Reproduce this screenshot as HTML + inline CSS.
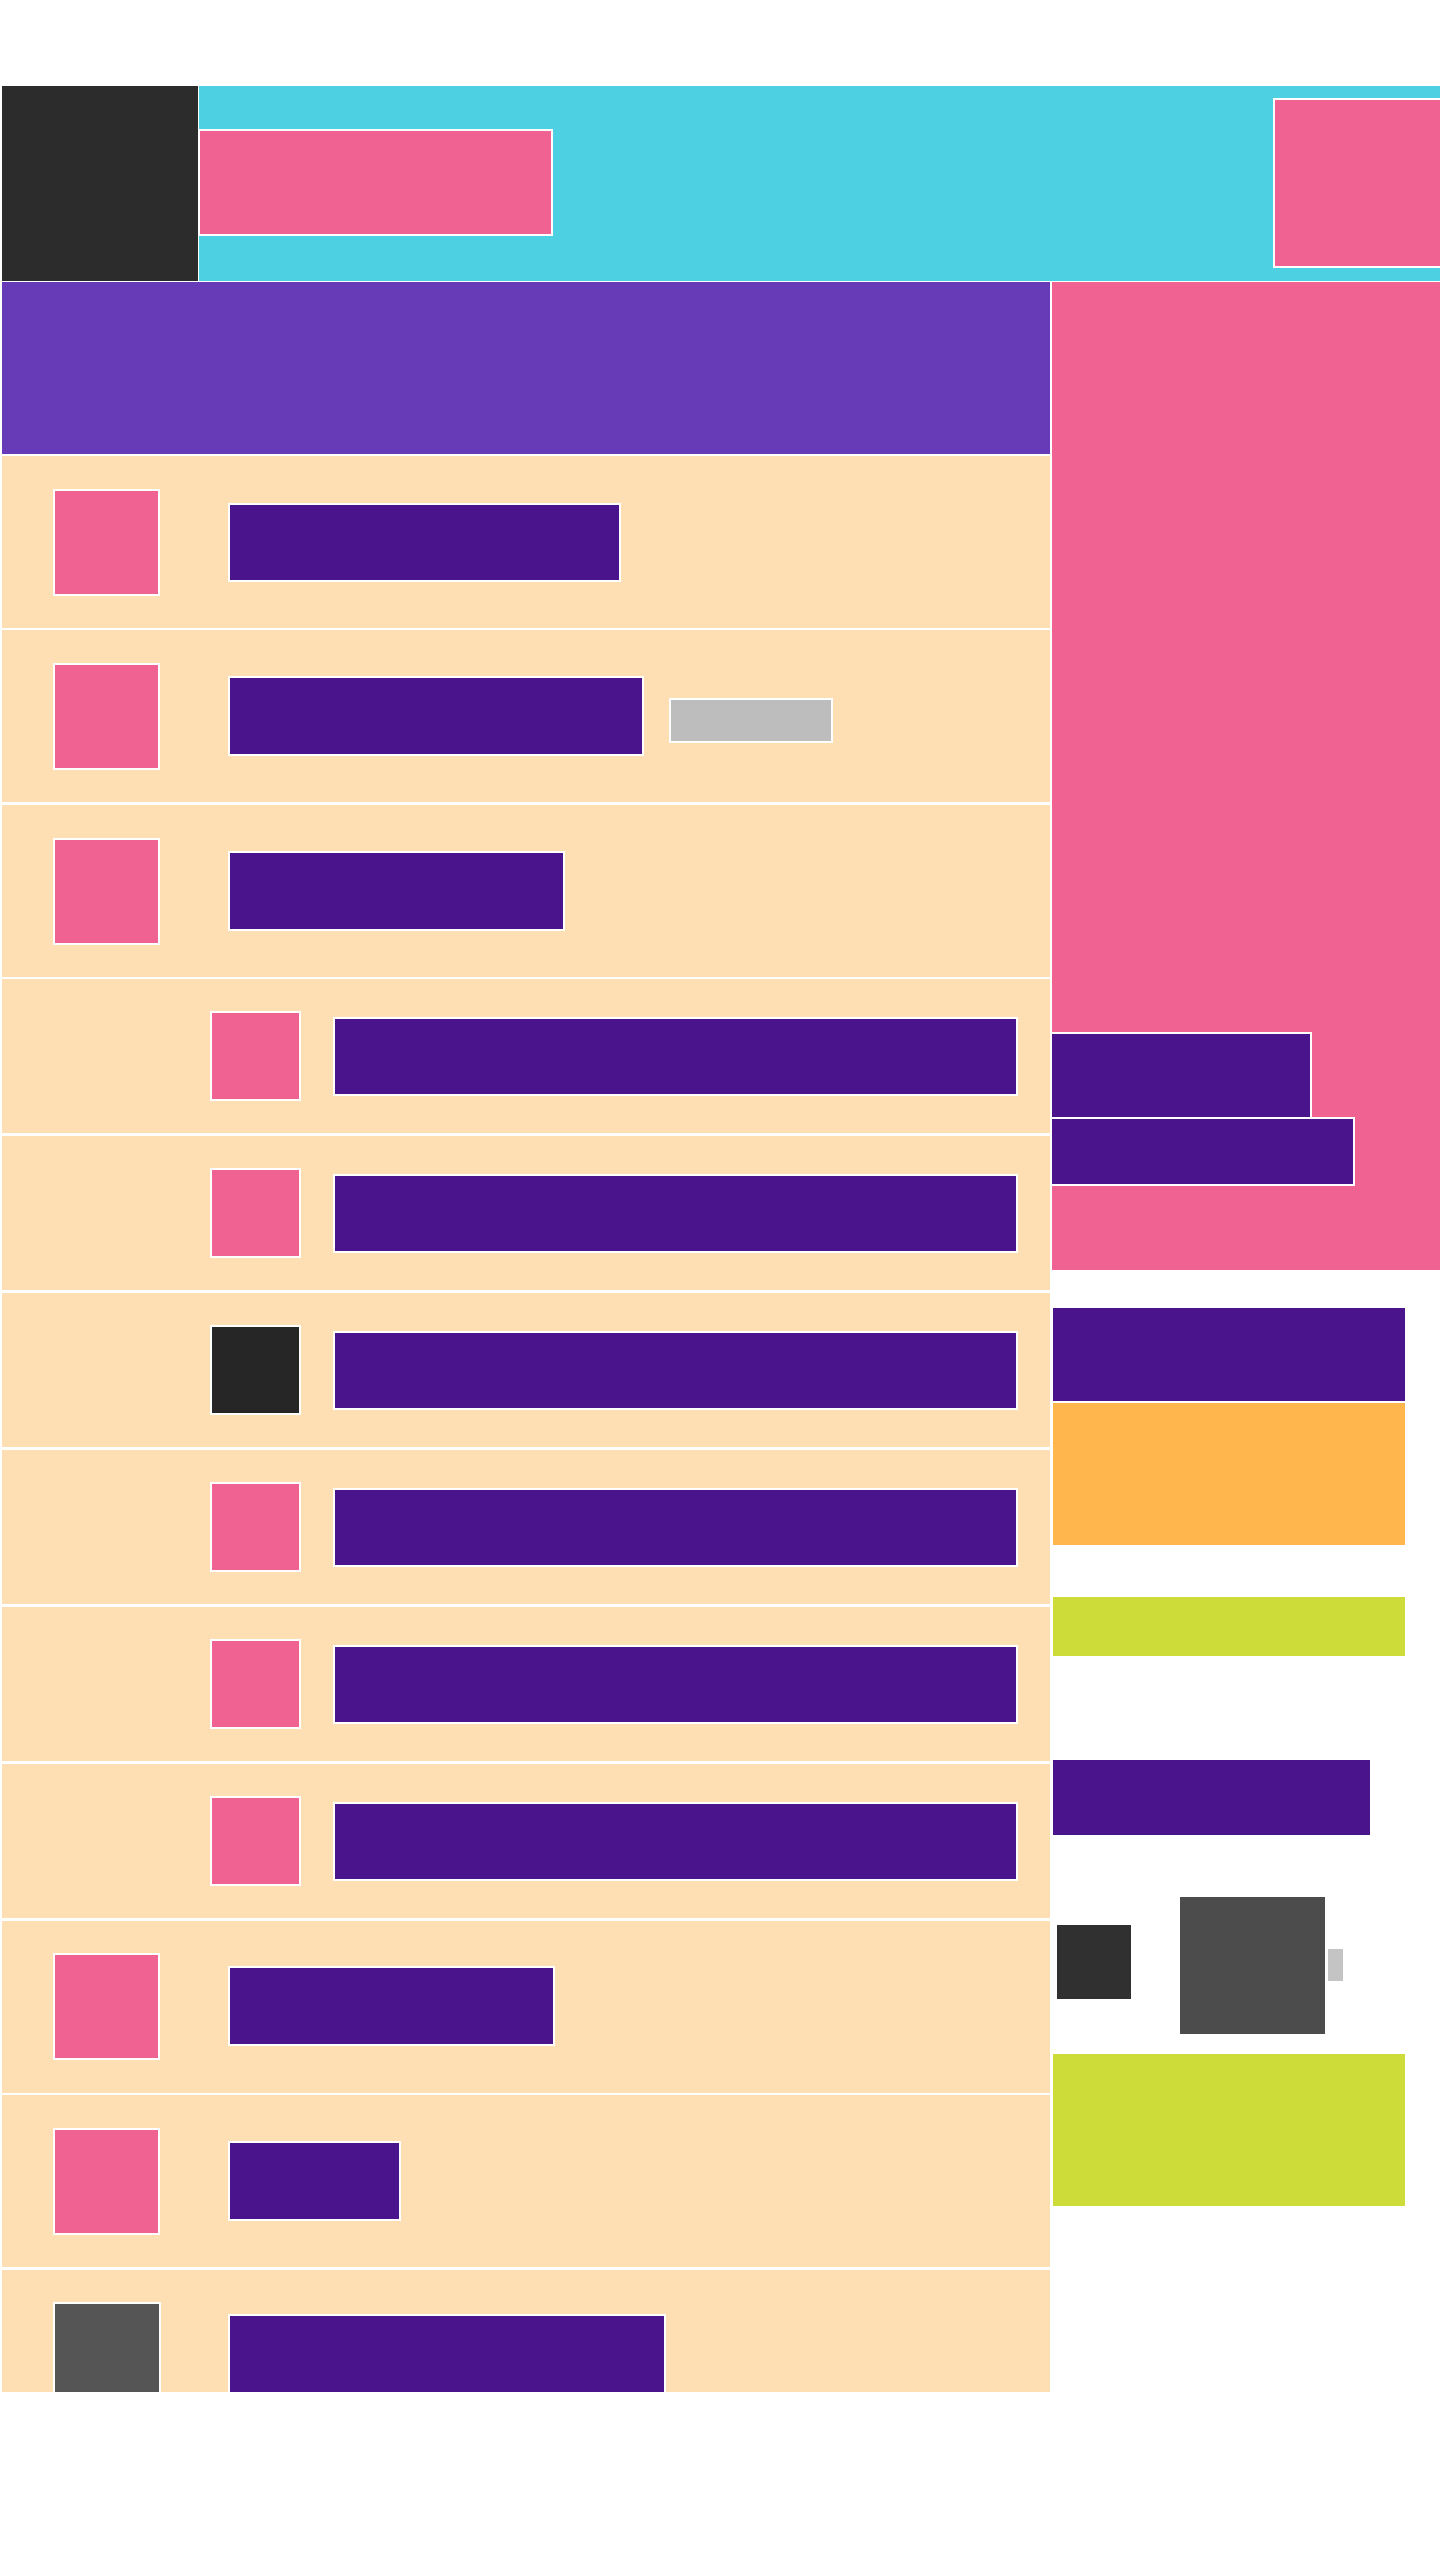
<!DOCTYPE html>
<html><head><meta charset="utf-8"><style>
html,body{margin:0;padding:0;background:#fff;}
body{width:1440px;height:2560px;position:relative;overflow:hidden;font-family:"Liberation Sans",sans-serif;}
div{position:absolute;box-sizing:border-box;}
.b{border:2px solid #fff;}
.row{background:#fddfb3;left:2px;width:1048px;}
.pk{background:#f06292;}
.pu{background:#4a148c;}
</style></head><body>
<!-- header -->
<div style="left:2px;top:86px;width:196px;height:195px;background:#2c2c2c"></div>
<div style="left:199px;top:86px;width:1241px;height:195px;background:#4dd0e1"></div>
<div class="b pk" style="left:198px;top:129px;width:355px;height:107px"></div>
<div class="b pk" style="left:1273px;top:98px;width:170px;height:170px"></div>
<!-- purple banner -->
<div style="left:2px;top:282px;width:1048px;height:172px;background:#673ab7"></div>
<!-- right pink sidebar -->
<div class="pk" style="left:1052px;top:282px;width:388px;height:988px"></div>
<div class="b pu" style="left:1050px;top:1032px;width:262px;height:87px"></div>
<div class="b pu" style="left:1050px;top:1117px;width:305px;height:69px"></div>
<!-- right column -->
<div class="pu" style="left:1053px;top:1308px;width:352px;height:93px"></div>
<div style="left:1053px;top:1403px;width:352px;height:142px;background:#ffb74d"></div>
<div style="left:1053px;top:1597px;width:352px;height:59px;background:#cddc39"></div>
<div class="pu" style="left:1053px;top:1760px;width:317px;height:75px"></div>
<div style="left:1057px;top:1925px;width:74px;height:74px;background:#303030"></div>
<div style="left:1180px;top:1897px;width:145px;height:137px;background:#4c4c4c"></div>
<div style="left:1328px;top:1949px;width:15px;height:32px;background:#c4c4c4"></div>
<div style="left:1053px;top:2054px;width:352px;height:152px;background:#cddc39"></div>

<!-- rows type A -->
<div class="row" style="top:456px;height:172px"></div>
<div class="b pk" style="left:53px;top:489px;width:107px;height:107px"></div>
<div class="b pu" style="left:228px;top:503px;width:393px;height:79px"></div>

<div class="row" style="top:630px;height:172px"></div>
<div class="b pk" style="left:53px;top:663px;width:107px;height:107px"></div>
<div class="b pu" style="left:228px;top:676px;width:416px;height:80px"></div>
<div class="b" style="left:669px;top:698px;width:164px;height:45px;background:#bdbdbd"></div>

<div class="row" style="top:805px;height:172px"></div>
<div class="b pk" style="left:53px;top:838px;width:107px;height:107px"></div>
<div class="b pu" style="left:228px;top:851px;width:337px;height:80px"></div>

<!-- rows type B -->
<div class="row" style="top:979px;height:154px"></div>
<div class="b pk" style="left:210px;top:1011px;width:91px;height:90px"></div>
<div class="b pu" style="left:333px;top:1017px;width:685px;height:79px"></div>

<div class="row" style="top:1136px;height:154px"></div>
<div class="b pk" style="left:210px;top:1168px;width:91px;height:90px"></div>
<div class="b pu" style="left:333px;top:1174px;width:685px;height:79px"></div>

<div class="row" style="top:1293px;height:154px"></div>
<div class="b" style="left:210px;top:1325px;width:91px;height:90px;background:#262626"></div>
<div class="b pu" style="left:333px;top:1331px;width:685px;height:79px"></div>

<div class="row" style="top:1450px;height:154px"></div>
<div class="b pk" style="left:210px;top:1482px;width:91px;height:90px"></div>
<div class="b pu" style="left:333px;top:1488px;width:685px;height:79px"></div>

<div class="row" style="top:1607px;height:154px"></div>
<div class="b pk" style="left:210px;top:1639px;width:91px;height:90px"></div>
<div class="b pu" style="left:333px;top:1645px;width:685px;height:79px"></div>

<div class="row" style="top:1764px;height:154px"></div>
<div class="b pk" style="left:210px;top:1796px;width:91px;height:90px"></div>
<div class="b pu" style="left:333px;top:1802px;width:685px;height:79px"></div>

<!-- rows type A bottom -->
<div class="row" style="top:1921px;height:172px"></div>
<div class="b pk" style="left:53px;top:1953px;width:107px;height:107px"></div>
<div class="b pu" style="left:228px;top:1966px;width:327px;height:80px"></div>

<div class="row" style="top:2095px;height:172px"></div>
<div class="b pk" style="left:53px;top:2128px;width:107px;height:107px"></div>
<div class="b pu" style="left:228px;top:2141px;width:173px;height:80px"></div>

<div class="row" style="top:2270px;height:122px"></div>
<div class="b" style="left:53px;top:2302px;width:108px;height:100px;background:#555"></div>
<div class="b pu" style="left:228px;top:2314px;width:438px;height:90px"></div>
<div style="left:0;top:2392px;width:1440px;height:168px;background:#fff"></div>
</body></html>
